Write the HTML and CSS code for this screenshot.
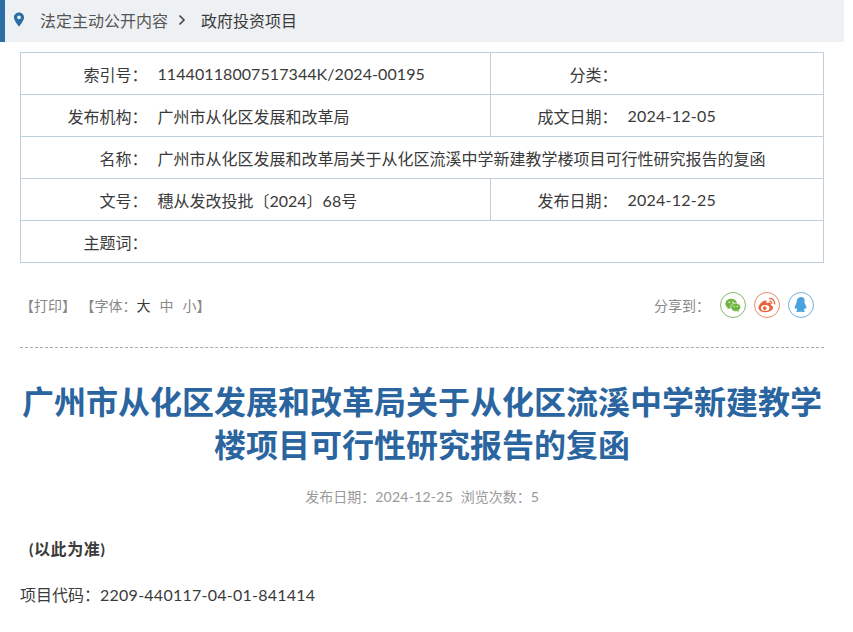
FILE: index.html
```html
<!DOCTYPE html>
<html lang="zh-CN">
<head>
    <meta charset="UTF-8">
    <title>政府投资项目</title>
    <link rel="stylesheet" href="styles.css">
</head>
<body>
    <div class="crumb">
        <svg class="pin" viewBox="0 0 12 16" width="12" height="15">
            <path fill="#2b6ea6" fill-rule="evenodd" d="M6 .5C2.900.5.600 2.800.600 5.800c0 3.600 5.400 9.700 5.400 9.700s5.400-6.100 5.400-9.700C11.400 2.800 9.100.500 6 .500zm0 7.200a2 2 0 1 1 0-4 2 2 0 0 1 0 4z"/>
        </svg>
        <span class="crumb-link">法定主动公开内容</span>
        <svg class="arrow" viewBox="0 0 8 12" width="8" height="12">
            <path fill="none" stroke="#444" stroke-width="1.600" d="M1.500 1.500 6 6l-4.500 4.500"/>
        </svg>
        <span class="crumb-now">政府投资项目</span>
    </div>

    <table class="info">
        <tr>
            <th>索引号：</th>
            <td><span class="code">11440118007517344K/2024-00195</span></td>
            <th class="right-label">分类：</th>
            <td class="right-value"></td>
        </tr>
        <tr>
            <th>发布机构：</th>
            <td>广州市从化区发展和改革局</td>
            <th class="right-label">成文日期：</th>
            <td class="right-value"><span class="num">2024-12-05</span></td>
        </tr>
        <tr>
            <th>名称：</th>
            <td colspan="3">广州市从化区发展和改革局关于从化区流溪中学新建教学楼项目可行性研究报告的复函</td>
        </tr>
        <tr>
            <th>文号：</th>
            <td>穗从发改投批〔2024〕68号</td>
            <th class="right-label">发布日期：</th>
            <td class="right-value"><span class="num">2024-12-25</span></td>
        </tr>
        <tr>
            <th>主题词：</th>
            <td colspan="3"></td>
        </tr>
    </table>

    <div class="tools">
        <div class="tools-left">
            <span class="print">【打印】</span>
            <span class="font-size">【字体：<b class="on">大</b><b>中</b><b>小</b>】</span>
        </div>
        <div class="share">
            <span class="share-label">分享到：</span>
            <span class="share-icon wechat">
                <svg viewBox="0 0 20 20">
                    <ellipse cx="8" cy="8.500" rx="6.500" ry="5.500" fill="#6fb53f"/>
                    <path fill="#6fb53f" d="M4.500 12l-.8 2.800 3-1.600z"/>
                    <ellipse cx="13" cy="12.500" rx="5.500" ry="4.600" fill="#6fb53f" stroke="#fff" stroke-width=".8"/>
                    <path fill="#6fb53f" d="M15.500 15.500l1.300 2.300-3.200-1.500z"/>
                    <circle cx="5.800" cy="7" r=".9" fill="#fff"/>
                    <circle cx="9.800" cy="7" r=".9" fill="#fff"/>
                    <circle cx="11.300" cy="11.600" r=".7" fill="#fff"/>
                    <circle cx="14.700" cy="11.600" r=".7" fill="#fff"/>
                </svg>
            </span>
            <span class="share-icon weibo">
                <svg viewBox="0 0 20 20">
                    <path fill="#e8643c" d="M8.300 18C4.200 18 .5 16 .5 13 .5 10.200 4.700 5.400 7.700 5c1.800-.2 2.300 1.400 1.700 3 1.600-.6 4.500-1.300 5 .4.200.7 0 1.300-.3 1.800 1.600.4 2.600 1.400 2.600 2.900 0 2.400-3.600 4.900-8.400 4.900z"/>
                    <ellipse cx="8" cy="13.300" rx="4.800" ry="3.200" fill="#fff"/>
                    <circle cx="7.500" cy="13.500" r="2" fill="#e8643c"/>
                    <path fill="none" stroke="#e8643c" stroke-width="1.500" d="M12.500 2.800c3.400-.5 6.600 2.300 5.800 6.600"/>
                    <path fill="none" stroke="#e8643c" stroke-width="1.300" d="M12.800 5.800c1.500-.2 2.900 1.100 2.500 3"/>
                </svg>
            </span>
            <span class="share-icon qq">
                <svg viewBox="0 0 20 20">
                    <path fill="#4aa3dd" d="M10 1C6.800 1 5.200 3.400 5.200 6.200c0 .9-.1 1.500-.6 2.300-1 1.600-2 3.700-1.500 5.400.2.700.9.300 1.500-.5.300 1 .8 1.900 1.600 2.500-1 .4-1.500.8-1.300 1.400.3.700 2.500.8 3.700.3.500-.2 1.300-.2 1.800 0 1.200.5 3.400.4 3.700-.3.200-.6-.3-1-1.300-1.400.8-.6 1.300-1.500 1.600-2.500.6.800 1.300 1.200 1.500.5.500-1.700-.5-3.800-1.500-5.400-.5-.8-.6-1.400-.6-2.300C14.800 3.400 13.200 1 10 1z"/>
                </svg>
            </span>
        </div>
    </div>

    <h1 class="title">广州市从化区发展和改革局关于从化区流溪中学新建教学楼项目可行性研究报告的复函</h1>
    <div class="meta">
        <span>发布日期：<span class="num">2024-12-25</span></span>
        <span>浏览次数：5</span>
    </div>

    <div class="content">
        <p class="notice">(以此为准)</p>
        <p>项目代码：<span class="num">2209-440117-04-01-841414</span></p>
    </div>
</body>
</html>
```

FILE: styles.css
```css
* {
    margin: 0;
    padding: 0;
    box-sizing: border-box;
}

body {
    font-family: Lato, "Noto Sans CJK SC", sans-serif;
    font-size: 16px;
    color: #3a3a3a;
    background-color: #fff;
    width: 853px;
    height: 632px;
    overflow: hidden;
}

.num {
    letter-spacing: .25px;
}

.code {
    letter-spacing: .08px;
}

.crumb {
    width: 844px;
    height: 42px;
    background-color: #eef1f4;
    border-left: 5px solid #2b6ea6;
    display: flex;
    align-items: center;
    padding-left: 8px;
    padding-bottom: 2px;
}

.pin {
    margin-bottom: 1px;
}

.crumb-link {
    margin-left: 15px;
    color: #555;
}

.arrow {
    margin: 0 15px 0 10px;
}

.info {
    width: 803px;
    margin: 10px 0 0 20px;
    border-collapse: collapse;
    table-layout: fixed;
}

.info th,
.info td {
    height: 42px;
    border: 1px solid #bdd0dc;
    font-weight: normal;
    white-space: nowrap;
}

.info tr > :nth-child(odd) {
    text-align: right;
    border-right: none;
}

.info tr > :nth-child(even) {
    text-align: left;
    border-left: none;
}

.info th {
    width: 127px;
}

.info td {
    padding-left: 10px;
    width: 343px;
}

.info .right-label {
    width: 127px;
}

.info .right-value {
    width: 206px;
}

.tools {
    display: flex;
    justify-content: space-between;
    align-items: center;
    height: 85px;
    margin-left: 20px;
    border-bottom: 1px dashed #aaa;
    width: 804px;
    padding-right: 10px;
    font-size: 14px;
    color: #888;
}

.print {
    margin-right: 1px;
}

.font-size b {
    font-weight: normal;
    margin-right: 9px;
}

.font-size b:last-of-type {
    margin-right: 0;
}

.font-size .on {
    color: #3a3a3a;
}

.share {
    display: flex;
    align-items: center;
}

.share-label {
    margin-right: 2px;
}

.share-icon {
    width: 26px;
    height: 26px;
    border-radius: 50%;
    margin-left: 8px;
    display: flex;
    align-items: center;
    justify-content: center;
    border: 1px solid #888;
}

.wechat {
    border-color: #86bb6a;
}

.weibo {
    border-color: #e68c6c;
}

.qq {
    border-color: #6fb3dc;
}

.share-icon svg {
    width: 18px;
    height: 18px;
}

.title {
    width: 804px;
    margin: 32px 0 0 20px;
    font-size: 32px;
    line-height: 43px;
    font-weight: bold;
    color: #2a659f;
    text-align: center;
}

.meta {
    margin: 20px 0 0 20px;
    width: 804px;
    text-align: center;
    font-size: 14px;
    color: #999;
}

.meta span {
    margin: 0 2px;
}

.meta .num {
    margin: 0;
}

.content {
    margin-left: 20px;
}

.content p {
    line-height: 30px;
}

.notice {
    margin-top: 28px;
    padding-left: 9px;
    font-weight: bold;
    letter-spacing: .6px;
    margin-bottom: 16px;
}
```
